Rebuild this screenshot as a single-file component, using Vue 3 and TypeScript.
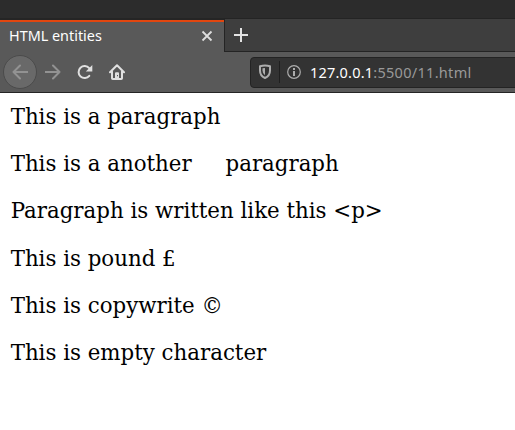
<script setup lang="ts">
const title: string = 'HTML entities'
const paragraphs: string[] = [
  'This is a paragraph',
  'This is a another\u00a0\u00a0\u00a0\u00a0 paragraph',
  'Paragraph is written like this <p>',
  'This is pound £',
  'This is copywrite ©',
  'This is empty character',
]
</script>

<template>
  <div class="window">
    <div class="desktop-bar"></div>
    <header class="tabs">
      <div class="tab">
        <span class="title">{{ title }}</span>
        <svg class="close" width="12" height="12" viewBox="0 0 12 12"><path d="M1.5 1.5l9 9M10.5 1.5l-9 9" /></svg>
      </div>
      <div class="strip">
        <svg class="plus" width="16" height="16" viewBox="0 0 16 16"><path d="M8 1v14M1 8h14" /></svg>
      </div>
    </header>
    <nav class="toolbar">
      <div class="back">
        <svg width="16" height="16" viewBox="0 0 16 16"><path d="M15.5 8H1.5M8 1.5L1.5 8L8 14.5" /></svg>
      </div>
      <svg class="forward" width="16" height="16" viewBox="0 0 16 16"><path d="M.5 8h14M8 1.5L14.5 8L8 14.5" /></svg>
      <svg class="reload" width="16" height="16" viewBox="0 0 16 16">
        <path class="line" d="M12.3 11.8A6 6 0 1 1 12.2 4.2" />
        <path class="fill" d="M15.3 1v6.5H8.8z" />
      </svg>
      <svg class="home" width="16" height="16" viewBox="0 0 16 16">
        <path class="line" d="M1 8.3L8 1.3L15 8.3M3 7.5v6.7q0 .8.8.8h8.4q.8 0 .8-.8V7.5" />
        <path class="fill" fill-rule="evenodd" d="M6 15V9.2q0-1 1-1h2q1 0 1 1V15zM8 11h1v1.2H8z" />
      </svg>
      <div class="urlbar">
        <svg class="shield" width="14" height="16" viewBox="0 0 14 16">
          <path class="line" d="M2 2.3Q7 .9 12 2.3V6.5Q12 11.8 7 14Q2 11.8 2 6.5Z" />
          <path class="fill" d="M4.5 4.3Q6 3.9 7 3.9V11.3Q4.5 9.8 4.5 6.5Z" />
        </svg>
        <span class="divider"></span>
        <svg class="info" width="14" height="14" viewBox="0 0 14 14">
          <circle cx="7" cy="7" r="6.3" />
          <path d="M6 3h2v2H6zM6 6h2v5H6z" />
        </svg>
        <span class="address"><b>127.0.0.1</b>:5500/11.html</span>
      </div>
    </nav>
    <main class="page">
      <p v-for="text in paragraphs" :key="text">{{ text }}</p>
    </main>
  </div>
</template>

<style>
body {
  margin: 0;
  background: #fff;
}
</style>

<style scoped>
.window {
  width: 515px;
  height: 430px;
  overflow: hidden;
  background: #fff;
}
svg {
  display: block;
  flex: none;
  fill: none;
}
.desktop-bar {
  height: 18px;
  background: #2c2c2c;
}
.tabs {
  display: flex;
  height: 34px;
  background: #595959;
}
.tab {
  box-sizing: border-box;
  display: flex;
  align-items: center;
  justify-content: space-between;
  width: 224px;
  padding: 0 11px 0 9px;
  border-top: 2px solid #e2460f;
  margin-top: 2px;
  position: relative;
}
.tab::before {
  content: '';
  position: absolute;
  inset: -4px 0 auto;
  height: 2px;
  background: #252525;
}
.title {
  font: 14.4px/20px "Noto Sans", sans-serif;
  color: #fff;
  white-space: nowrap;
  margin-top: -3px;
}
.close {
  margin-top: -2px;
  stroke: #dedede;
  stroke-width: 1.8;
}
.strip {
  box-sizing: border-box;
  flex: 1;
  padding: 8px 0 0 8px;
  border: solid #242424;
  border-width: 1px 0 1px 1px;
  background: #3e3e3e;
}
.plus {
  stroke: #e3e3e3;
  stroke-width: 2;
}
.toolbar {
  box-sizing: border-box;
  display: flex;
  align-items: center;
  height: 41px;
  padding-left: 3px;
  border-bottom: 1px solid #242424;
  background: #595959;
}
.back {
  box-sizing: border-box;
  display: flex;
  align-items: center;
  justify-content: center;
  width: 34px;
  height: 34px;
  border: 1px solid #4b4b4b;
  border-radius: 50%;
  background: #696969;
}
.back svg,
.forward {
  stroke: #929292;
  stroke-width: 2;
  stroke-linecap: round;
  stroke-linejoin: round;
}
.forward {
  margin-left: 8px;
}
.reload,
.home {
  margin-left: 16px;
}
.line {
  stroke: #e0e0e0;
  stroke-width: 2;
  stroke-linejoin: round;
  stroke-linecap: round;
}
.fill {
  fill: #e0e0e0;
}
.urlbar {
  box-sizing: border-box;
  display: flex;
  align-items: center;
  flex: 1;
  height: 31px;
  margin: 0 -5px 0 125px;
  padding-left: 7px;
  border: 1px solid #232323;
  border-radius: 4px;
  background: #333;
}
.shield .line {
  stroke: #adadad;
}
.shield .fill {
  fill: #adadad;
}
.divider {
  width: 1px;
  height: 22px;
  margin: 0 7px;
  background: #1f1f1f;
}
.info circle {
  stroke: #adadad;
  stroke-width: 1.2;
}
.info path {
  fill: #adadad;
}
.address {
  margin-left: 9px;
  font: 14.5px/20px "Noto Sans", sans-serif;
  letter-spacing: 0.3px;
  color: #999;
  white-space: nowrap;
}
.address b {
  font-weight: 400;
  letter-spacing: 0.2px;
  color: #fff;
}
.page {
  padding: 11px 10.67px 0;
  font: 21.33px/26px "DejaVu Serif", serif;
  color: #000;
}
p {
  margin: 0 0 21.2px;
  white-space: nowrap;
}
</style>
